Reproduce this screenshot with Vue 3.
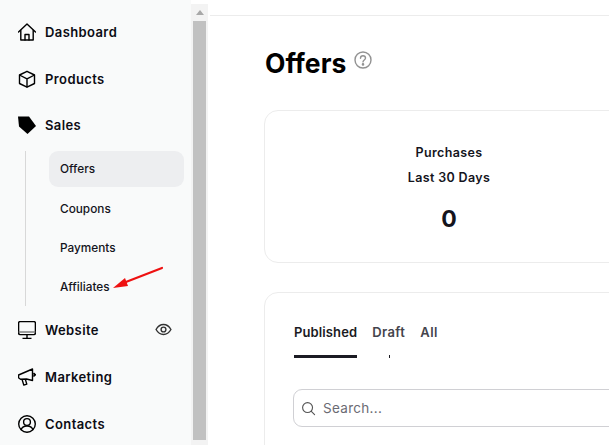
<script setup>
const subs = [
  { label: 'Offers', active: true },
  { label: 'Coupons' },
  { label: 'Payments' },
  { label: 'Affiliates' }
]
</script>

<template>
  <div class="page">
    <aside class="sidebar">
      <nav class="nav">
        <a class="item first">
          <svg class="ico" viewBox="18 23.500 18 18" fill="none" stroke="#000" stroke-width="1.400" stroke-linejoin="round" stroke-linecap="round">
            <path d="M18.500 32.500 27 24.500l8.500 8"/>
            <path d="M20.800 31v9.500h12.400V31"/>
            <path d="M25 40.500V35h4v5.500"/>
          </svg>
          <span>Dashboard</span>
        </a>
        <a class="item">
          <svg class="ico" viewBox="18 70 18 18" fill="none" stroke="#000" stroke-width="1.400" stroke-linejoin="round">
            <path d="M27 71.300 34.500 75v8.500L27 87.200l-7.500-3.700V75z"/>
            <path d="M19.500 75 27 78.800l7.500-3.800M27 78.800v8.400"/>
          </svg>
          <span>Products</span>
        </a>
        <a class="item short">
          <svg class="ico" viewBox="18 116.500 18 18" fill="#000">
            <path d="M18 117h11l7 9.500-8.500 8L19 127z"/>
          </svg>
          <span>Sales</span>
        </a>
        <div class="subnav">
          <a v-for="s in subs" :key="s.label" class="sub" :class="{ active: s.active }">{{ s.label }}</a>
        </div>
        <a class="item website">
          <svg class="ico" viewBox="18 322 18 18" fill="none" stroke="#000" stroke-width="1.400" stroke-linejoin="round">
            <rect x="18.600" y="322.600" width="16.800" height="13" rx="1.500"/>
            <path d="M18.600 333h16.800" stroke="#777" stroke-width="1.400"/>
            <path d="M27 335.600v3.600M22.500 339.400h9"/>
          </svg>
          <span>Website</span>
          <svg class="eye" viewBox="0 0 18 14" fill="none" stroke="#333" stroke-width="1.500">
            <path d="M1 7c2-3.600 4.800-5.400 8-5.400S15 3.400 17 7c-2 3.600-4.800 5.400-8 5.400S3 10.600 1 7z"/>
            <circle cx="9" cy="7" r="2.600"/>
          </svg>
        </a>
        <a class="item">
          <svg class="ico" viewBox="18 369.500 18 18" fill="none" stroke="#000" stroke-width="1.400" stroke-linejoin="round">
            <path d="M18.600 376.500 32.500 370.500v11.500l-6-1.500-6 .3-2-1.500z"/>
            <path d="M22 380.800l1.800 5.800 3-1-1.500-4.800"/>
            <path d="M33.500 374.500l2 1.800-2 1.800" fill="#000"/>
          </svg>
          <span>Marketing</span>
        </a>
        <a class="item">
          <svg class="ico" viewBox="18 416.500 18 18" fill="none" stroke="#000" stroke-width="1.400">
            <circle cx="27" cy="425.500" r="8.300"/>
            <circle cx="27" cy="423.500" r="3.400"/>
            <path d="M21 431.700c.6-2.800 3-4.200 6-4.200s5.400 1.400 6 4.200"/>
          </svg>
          <span>Contacts</span>
        </a>
      </nav>
    </aside>

    <div class="scrollbar">
      <div class="arrow"></div>
      <div class="thumb"></div>
    </div>

    <main class="main">
      <div class="topbar"></div>
      <div class="content">
        <header class="title-row">
          <h1>Offers</h1>
          <svg class="help" viewBox="0 0 18 18" fill="none" stroke="#929292" stroke-width="1.400">
            <circle cx="9" cy="9" r="8"/>
            <path d="M6.500 7.200C6.500 5.700 7.600 4.800 9 4.800s2.500.9 2.500 2.300c0 1.900-2.500 1.900-2.500 3.800" stroke-linecap="round"/>
            <circle cx="9" cy="13.400" r=".6" fill="#929292"/>
          </svg>
        </header>

        <section class="card stats">
          <div class="stat">
            <div class="stat-label">Purchases</div>
            <div class="stat-label">Last 30 Days</div>
            <div class="stat-value">0</div>
          </div>
        </section>

        <section class="card list">
          <div class="tabs">
            <div class="tab on">Published<i class="bar"></i></div>
            <div class="tab">Draft<i class="tick"></i></div>
            <div class="tab">All</div>
          </div>
          <div class="search">
            <svg class="search-ico" viewBox="0 0 16 16" fill="none" stroke="#555" stroke-width="1.200" stroke-linecap="round">
              <circle cx="7" cy="7" r="5.300"/>
              <path d="m11 11 3.500 3.500"/>
            </svg>
            <span>Search...</span>
          </div>
        </section>
      </div>
    </main>

    <svg class="annotation" viewBox="0 0 609 445" aria-hidden="true">
      <path d="M162 268 122 283.500" stroke="#ee1111" stroke-width="2.200" fill="none" stroke-linecap="round"/>
      <path d="M113 288 125 278 128 286z" fill="#ee1111"/>
    </svg>
  </div>
</template>

<style scoped>
.page {
  position: relative;
  display: flex;
  width: 609px;
  height: 445px;
  overflow: hidden;
  background: #fff;
  font-family: Inter, "Liberation Sans", sans-serif;
  color: #111;
}
.sidebar {
  width: 191px;
  flex: none;
  background: #f9fafa;
}
.nav {
  display: flex;
  flex-direction: column;
}
.item {
  display: flex;
  align-items: center;
  height: 47px;
  padding: 0 18px;
  gap: 9px;
  font-size: 13px;
  font-weight: 600;
  letter-spacing: .4px;
  color: #0c0c14;
}
.first {
  margin-top: 8px;
}
.short {
  height: 46px;
}
.ico {
  width: 18px;
  height: 18px;
  flex: none;
}
.website {
  position: relative;
}
.eye {
  width: 17px;
  height: 13px;
  margin-left: auto;
  margin-right: 1px;
}
.subnav {
  display: flex;
  flex-direction: column;
  margin: 3px 0 0 25px;
  padding-left: 23px;
  border-left: 1px solid #d8d8d8;
  height: 155px;
}
.sub {
  display: flex;
  align-items: center;
  flex: none;
  height: 39px;
  padding-left: 11px;
  font-size: 11.800px;
  font-weight: 500;
  color: #14141c;
  border-radius: 9px;
  width: 135px;
  box-sizing: border-box;
}
.sub.active {
  height: 36px;
  margin-bottom: 2px;
  background: #edeef0;
}
.scrollbar {
  width: 17px;
  flex: none;
  display: flex;
  flex-direction: column;
  align-items: center;
  background: #f3f3f3;
  margin-top: 4px;
}
.arrow {
  flex: none;
  width: 0;
  height: 0;
  margin: 6px 0;
  border-left: 4px solid transparent;
  border-right: 4px solid transparent;
  border-bottom: 5px solid #a8a8a8;
}
.thumb {
  width: 13px;
  height: 419px;
  flex: none;
  background: #c1c1c1;
}
.main {
  flex: 1;
  min-width: 0;
}
.topbar {
  height: 15px;
  margin-left: 2px;
  border-bottom: 1px solid #ececec;
}
.content {
  padding-left: 56px;
  width: 800px;
}
.title-row {
  display: flex;
  align-items: flex-start;
  height: 94px;
}
h1 {
  margin: 29px 0 0 1px;
  font-size: 26.500px;
  line-height: 36px;
  font-weight: 700;
  color: #000;
}
.help {
  width: 18px;
  height: 18px;
  margin: 35px 0 0 8px;
}
.card {
  border: 1px solid #ececec;
  border-radius: 14px;
  box-sizing: border-box;
}
.stats {
  height: 153px;
  margin-bottom: 29px;
}
.stat {
  width: 368px;
  padding-top: 29px;
  text-align: center;
}
.stat-label {
  font-size: 12.500px;
  font-weight: 600;
  line-height: 25px;
  letter-spacing: .35px;
  color: #14141c;
}
.stat-value {
  margin-top: 15px;
  font-size: 23px;
  line-height: 28px;
  font-weight: 700;
  color: #14141c;
}
.list {
  height: 200px;
  padding: 0 29px;
}
.tabs {
  display: flex;
  gap: 15px;
  padding-top: 31px;
}
.tab {
  position: relative;
  height: 34px;
  font-size: 13px;
  font-weight: 600;
  line-height: 16px;
  letter-spacing: .4px;
  color: #44444c;
}
.tab.on {
  color: #1b1b23;
  letter-spacing: .12px;
}
.bar {
  position: absolute;
  left: 0;
  right: 0;
  bottom: 0;
  height: 3px;
  background: #1b1b23;
}
.tick {
  position: absolute;
  left: 50%;
  bottom: 0;
  width: 1px;
  height: 3px;
  background: #1b1b23;
}
.search {
  display: flex;
  align-items: center;
  gap: 7px;
  box-sizing: border-box;
  height: 38px;
  margin: 31px 0 0 -1px;
  padding-left: 7px;
  border: 1px solid #d0d0d4;
  border-radius: 9px;
  font-size: 13.500px;
  color: #6b6b73;
  letter-spacing: .3px;
}
.search-ico {
  width: 15px;
  height: 15px;
}
.annotation {
  position: absolute;
  inset: 0;
  width: 609px;
  height: 445px;
  pointer-events: none;
}
</style>
